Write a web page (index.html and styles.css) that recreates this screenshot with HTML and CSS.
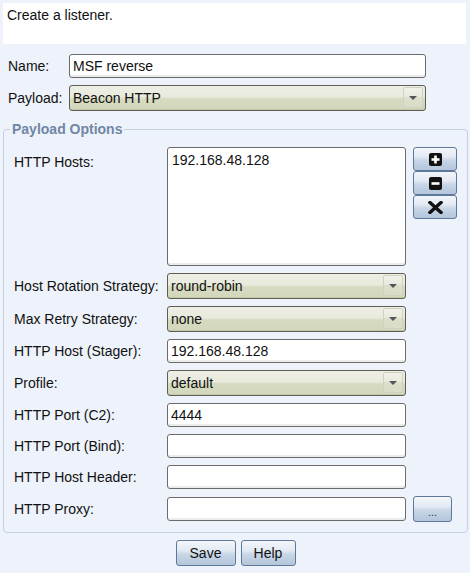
FILE: index.html
```html
<!DOCTYPE html>
<html>
<head>
<meta charset="utf-8">
<link rel="stylesheet" href="styles.css">
</head>
<body>
<div class="header">Create a listener.</div>
<div class="top-form">
  <label class="lbl">Name:</label>
  <div class="input">MSF reverse</div>
  <label class="lbl">Payload:</label>
  <div class="select">Beacon HTTP<span class="arrow"></span></div>
</div>
<fieldset class="options">
  <legend>Payload Options</legend>
  <div class="grid">
    <label class="lbl lbl-top">HTTP Hosts:</label>
    <div class="textarea">192.168.48.128</div>
    <div class="btn-stack">
      <div class="btn icon-btn"><svg width="13" height="13" viewBox="0 0 13 13"><rect x="0" y="0" width="13" height="13" rx="2" fill="#111"/><rect x="5.2" y="2.5" width="2.6" height="8" fill="#fff"/><rect x="2.5" y="5.2" width="8" height="2.6" fill="#fff"/></svg></div>
      <div class="btn icon-btn"><svg width="13" height="13" viewBox="0 0 13 13"><rect x="0" y="0" width="13" height="13" rx="2" fill="#111"/><rect x="2.5" y="5.2" width="8" height="2.6" fill="#fff"/></svg></div>
      <div class="btn icon-btn"><svg width="15" height="13" viewBox="0 0 15 13"><path d="M2 1.5 L13 11.5 M13 1.5 L2 11.5" stroke="#111" stroke-width="3.4" stroke-linecap="square"/></svg></div>
    </div>

    <label class="lbl">Host Rotation Strategy:</label>
    <div class="select">round-robin<span class="arrow"></span></div>
    <div></div>

    <label class="lbl">Max Retry Strategy:</label>
    <div class="select">none<span class="arrow"></span></div>
    <div></div>

    <label class="lbl">HTTP Host (Stager):</label>
    <div class="input">192.168.48.128</div>
    <div></div>

    <label class="lbl">Profile:</label>
    <div class="select">default<span class="arrow"></span></div>
    <div></div>

    <label class="lbl">HTTP Port (C2):</label>
    <div class="input">4444</div>
    <div></div>

    <label class="lbl">HTTP Port (Bind):</label>
    <div class="input"></div>
    <div></div>

    <label class="lbl">HTTP Host Header:</label>
    <div class="input"></div>
    <div></div>

    <label class="lbl">HTTP Proxy:</label>
    <div class="input"></div>
    <div class="btn dots">...</div>
  </div>
</fieldset>
<div class="actions">
  <div class="btn action save">Save</div>
  <div class="btn action help">Help</div>
</div>
</body>
</html>
```
FILE: styles.css
```css
html, body {
  margin: 0;
  padding: 0;
}
body {
  width: 470px;
  height: 573px;
  background: #eef2fa;
  font-family: "Liberation Sans", Arial, sans-serif;
  font-size: 14px;
  color: #111;
  line-height: 16px;
  overflow: hidden;
}
.header {
  margin: 3px 4px 0 3px;
  height: 41px;
  box-sizing: border-box;
  background: #fff;
  padding: 4px 4px;
}
.top-form {
  display: grid;
  grid-template-columns: 61px 357px;
  row-gap: 7px;
  align-items: center;
  padding: 10px 0 0 8px;
}
.lbl {
  display: block;
  white-space: nowrap;
}
.input {
  box-sizing: border-box;
  height: 24px;
  background: #fff;
  border: 1px solid #6b6b6b;
  border-radius: 3px;
  box-shadow: inset 0 -2px 0 #ececec;
  padding: 3px 3px 0 3px;
}
.textarea {
  box-sizing: border-box;
  height: 119px;
  background: #fff;
  border: 1px solid #6b6b6b;
  border-radius: 3px;
  box-shadow: inset 0 -2px 0 #ececec;
  padding: 4px 3px 0 4px;
}
.select {
  position: relative;
  box-sizing: border-box;
  height: 26px;
  border: 1px solid #5e5e52;
  border-radius: 3px;
  background: linear-gradient(#eeefe5 0, #e8eadc 46%, #d6dac0 54%, #d3d7ba 100%);
  box-shadow: inset 0 -1px 0 #c3c7ab;
  padding: 4px 3px 0 3px;
}
.arrow {
  position: absolute;
  right: 2px;
  top: 1px;
  width: 20px;
  height: 21px;
  box-sizing: border-box;
  border: 1px solid #cfd1c1;
  border-radius: 2px;
  background: linear-gradient(#f0f1e8 0, #e8e9dd 50%, #dcdfcb 50%, #d9dcc6 100%);
}
.arrow::after {
  content: "";
  position: absolute;
  left: 5px;
  top: 8px;
  border-left: 4px solid transparent;
  border-right: 4px solid transparent;
  border-top: 4px solid #555;
}
.options {
  margin: 10px 3px 0 3px;
  padding: 10px 10px 10px 10px;
  border: 1px solid #c5d0df;
  border-radius: 4px;
}
.options legend {
  font-weight: bold;
  color: #7087a6;
  padding: 0 2px;
  margin-left: -4px;
  line-height: 16px;
}
.grid {
  display: grid;
  grid-template-columns: 146px 239px 44px;
  column-gap: 7px;
  row-gap: 7px;
  align-items: center;
}
.lbl-top {
  align-self: start;
  padding-top: 7px;
}
.btn-stack {
  align-self: start;
  display: flex;
  flex-direction: column;
}
.btn {
  box-sizing: border-box;
  border: 1px solid #5d7899;
  border-radius: 3px;
  background: linear-gradient(#f3f6fa 0, #e3eaf3 40%, #c8d6e6 55%, #b4c6dc 100%);
  display: flex;
  align-items: center;
  justify-content: center;
}
.icon-btn {
  height: 24px;
  width: 44px;
}
.dots {
  width: 39px;
  height: 26px;
  font-size: 11px;
  color: #333;
  padding-top: 6px;
}
.actions {
  display: flex;
  justify-content: center;
  gap: 5px;
  padding-top: 7px;
  padding-left: 1px;
}
.action {
  height: 26px;
  color: #111;
}
.save {
  width: 60px;
}
.help {
  width: 55px;
}
```
